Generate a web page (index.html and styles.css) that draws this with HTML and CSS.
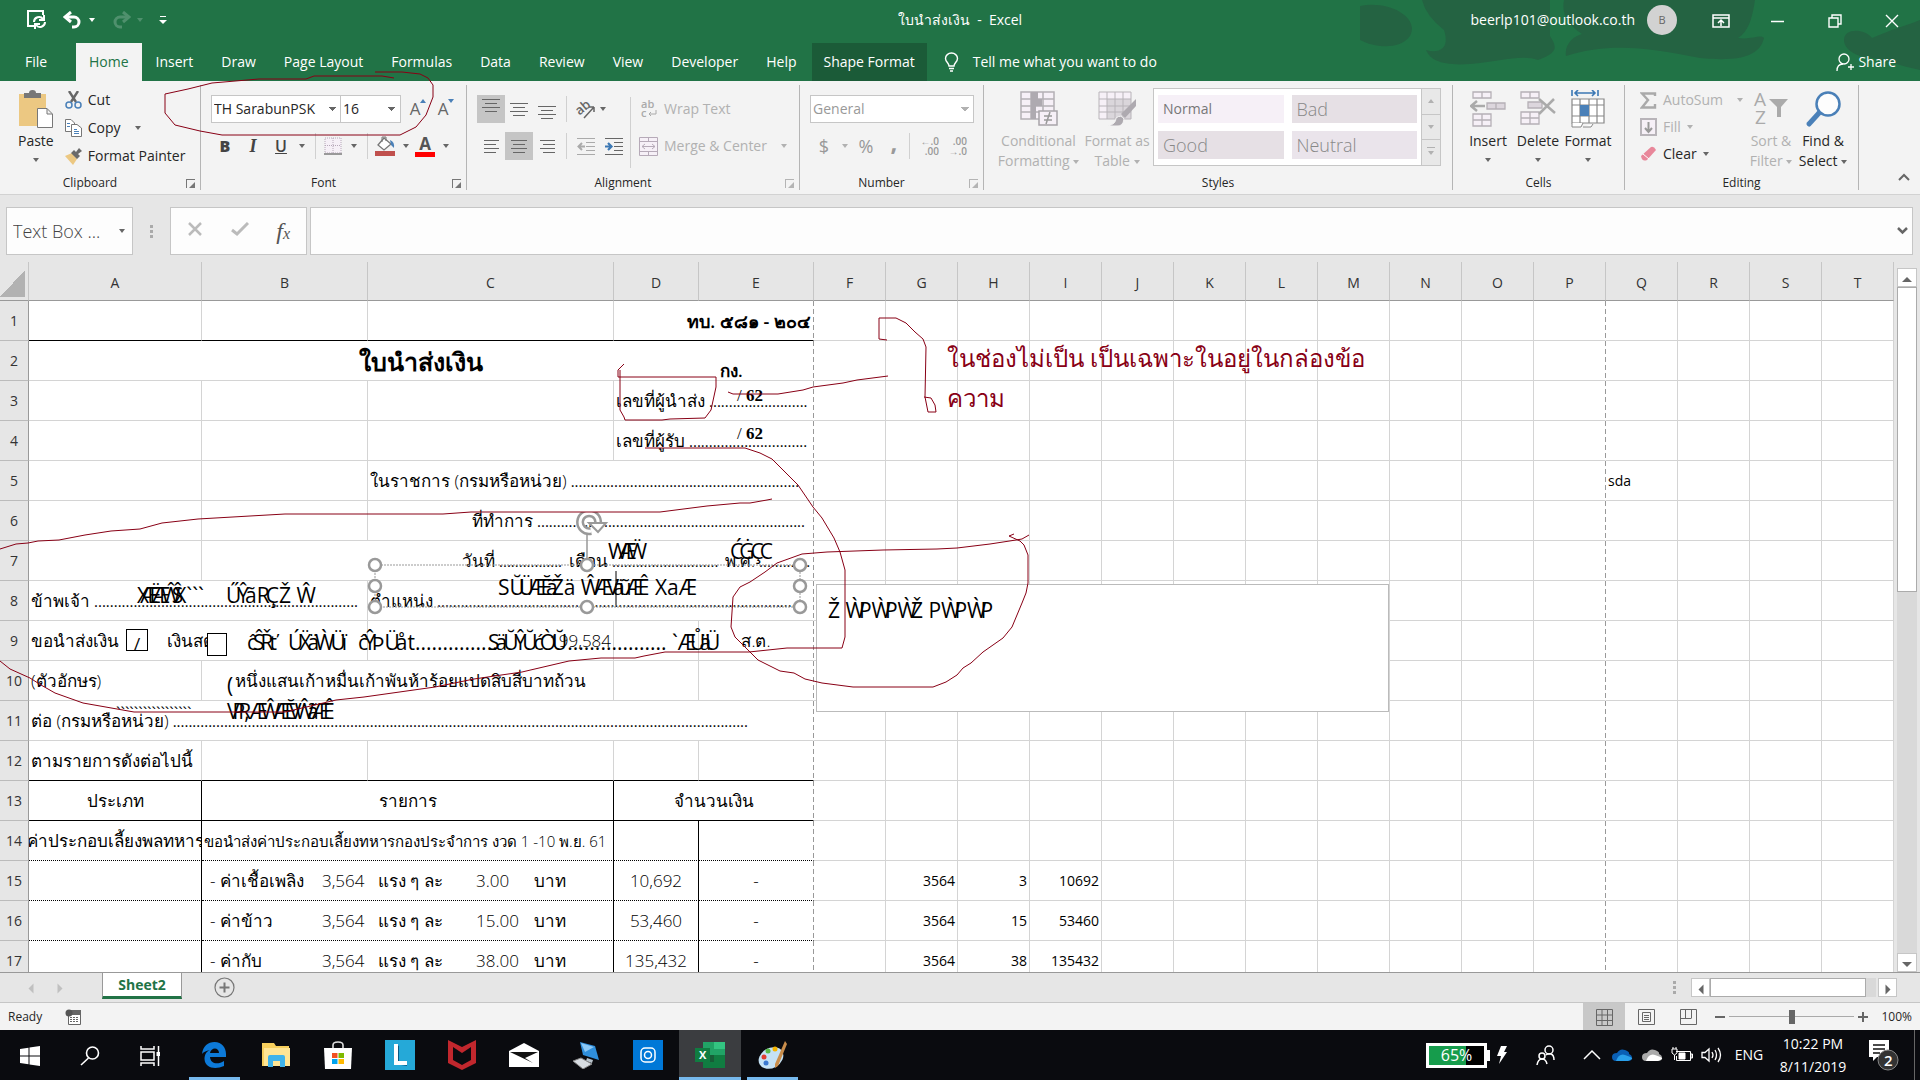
FILE: index.html
```html
<!DOCTYPE html>
<html lang="en">

<head>
  <meta charset="UTF-8" />
  <meta name="viewport" content="width=device-width, initial-scale=1.0" />
  <title>ใบนำส่งเงิน - Excel</title>
  <link rel="stylesheet" href="styles.css">
</head>

<body>
  <!-- Title bar and tabs -->
  <header class="app-header">
    <svg class="header-art" viewBox="0 0 560 81" aria-hidden="true">
      <path d="M0 6C30 0 60 18 50 36C40 50 15 48 0 40Z M62 0H190V36C196 46 200 52 178 60C160 54 140 62 110 64C82 66 70 60 66 50C80 54 90 48 84 30Q66 16 62 0Z M204 0H395C392 20 388 32 378 38C392 40 400 34 404 38C400 56 380 62 340 58C290 48 250 42 206 56C204 44 214 36 222 34Q200 20 204 0Z M484 40C484 28 504 28 512 38C530 30 545 26 560 20V70C540 66 520 58 500 56Q484 50 484 40Z" />
    </svg>
    <div class="title-bar">
      <div class="quick-access">
        <button class="quick-btn" title="Save">
          <svg width="20" height="20" viewBox="0 0 20 20" fill="none" stroke="#fff" stroke-width="2"><path d="M7 16H1V1H16V5" /><path d="M7 12A5 5 0 0 1 16 9M18 12A5 5 0 0 1 9 15M17 5V10H12M8 19V14H13" /></svg>
        </button>
        <button class="quick-btn undo" title="Undo">
          <svg width="20" height="18" viewBox="0 0 20 18" fill="none" stroke="#fff" stroke-width="3"><path d="M2 6H11A5 5 0 0 1 11 16H9" /><path d="M8 1L2 6L8 11" /></svg>
          <i class="caret"></i>
        </button>
        <button class="quick-btn redo" title="Redo">
          <svg width="20" height="18" viewBox="0 0 20 18" fill="none" stroke="#4f906d" stroke-width="3"><path d="M18 6H9A5 5 0 0 0 9 16H11" /><path d="M12 1L18 6L12 11" /></svg>
          <i class="caret"></i>
        </button>
        <button class="quick-btn" title="Customize Quick Access Toolbar">
          <svg width="8" height="8" viewBox="0 0 8 8" fill="#fff"><path d="M1 0H7V1H1ZM0 4H8L4 8Z" /></svg>
        </button>
      </div>
      <h1 class="window-title">ใบนำส่งเงิน &nbsp;-&nbsp; Excel</h1>
      <div class="window-tools">
        <span class="account">beerlp101@outlook.co.th</span>
        <span class="avatar">B</span>
        <button class="win-btn" title="Ribbon Display Options">
          <svg width="18" height="14" viewBox="0 0 18 14" fill="none" stroke="#fff"><path d="M1 1H17V13H1ZM1 4H17M9 12V6M6 9L9 6L12 9" stroke-width="1.5" /></svg>
        </button>
        <button class="win-btn" title="Minimize"><svg width="13" height="14" viewBox="0 0 13 14"><path d="M0 7.5H13" stroke="#fff" stroke-width="1.5" /></svg></button>
        <button class="win-btn" title="Restore Down">
          <svg width="14" height="14" viewBox="0 0 14 14" fill="none" stroke="#fff" stroke-width="1.4"><path d="M1 4H10V13H1ZM4 4V1H13V10H10" /></svg>
        </button>
        <button class="win-btn" title="Close"><svg width="14" height="14" viewBox="0 0 14 14"><path d="M1 1L13 13M13 1L1 13" stroke="#fff" stroke-width="1.4" /></svg></button>
      </div>
    </div>
    <nav class="tabs">
      <button class="tab file">File</button>
      <button class="tab active">Home</button>
      <button class="tab">Insert</button>
      <button class="tab">Draw</button>
      <button class="tab">Page Layout</button>
      <button class="tab">Formulas</button>
      <button class="tab">Data</button>
      <button class="tab">Review</button>
      <button class="tab">View</button>
      <button class="tab">Developer</button>
      <button class="tab">Help</button>
      <button class="tab context">Shape Format</button>
      <button class="tab tell-me">
        <svg width="15" height="20" viewBox="0 0 15 20" fill="none" stroke="#fff" stroke-width="1.4"><path d="M5 14C5 11 1.500 10 1.500 6.500A6 5.500 0 0 1 13.500 6.500C13.500 10 10 11 10 14ZM5 16.500H10M6 19H9" /></svg>
        Tell me what you want to do
      </button>
      <button class="tab share">
        <svg width="18" height="19" viewBox="0 0 18 19" fill="none" stroke="#fff" stroke-width="1.3"><path d="M1 18C1 13 3 11 7 11M12 14H18M15 11V17" /><circle cx="8" cy="6" r="5" /></svg>
        Share
      </button>
    </nav>
  </header>

  <!-- Ribbon -->
  <section class="ribbon">
    <div class="group clipboard">
      <div class="group-body">
        <button class="big-btn">
          <svg width="34" height="38" viewBox="0 0 34 38"><path d="M0 4H27V36H0Z" fill="#ecc882" /><path d="M5 8V3H10Q10 0 13.500 0T17 3H22V8Z" fill="#777" /><path d="M18.500 18.500H28L33.500 24V37.500H18.500ZM28 18.500V24H33" fill="#fff" stroke="#777" /></svg>
          <span>Paste</span><i class="caret"></i>
        </button>
        <div class="stack">
          <button class="tool">
            <svg width="17" height="18" viewBox="0 0 17 18" fill="none"><path d="M4 0L11 11M13 0L6 11" stroke="#666" stroke-width="2.400" /><circle cx="4" cy="14" r="3" stroke="#4a80b8" stroke-width="1.500" /><circle cx="13" cy="14" r="3" stroke="#4a80b8" stroke-width="1.500" /></svg>
            Cut
          </button>
          <button class="tool">
            <svg width="17" height="18" viewBox="0 0 17 18" fill="#fff" stroke="#777"><path d="M.5.5H6L9.500 4V12.500H.5Z" /><path d="M6.500 5.500H12L16.500 9V17.500H6.500Z" /><path d="M2 4.500H5M2 7.500H5M9 10.500H12M9 12.500H14M9 14.500H14" stroke="#4a80b8" /></svg>
            Copy <i class="caret wide"></i>
          </button>
          <button class="tool">
            <svg width="17" height="17" viewBox="0 0 17 17"><path d="M0 8L7 5L12 11L8 17Z" fill="#ecc882" /><path d="M6 5L9 2L11 4L14 0L17 3L13 6L15 8L12 11Z" fill="#6b6b6b" /></svg>
            Format Painter
          </button>
        </div>
      </div>
      <div class="group-name">Clipboard<i class="launcher"></i></div>
    </div>

    <div class="group font">
      <div class="group-body rows">
        <div class="row">
          <select class="combo font-name" aria-label="Font"><option>TH SarabunPSK</option></select>
          <select class="combo font-size" aria-label="Font size"><option>16</option></select>
          <button class="icon-btn grow" title="Increase Font Size">A<svg width="6" height="4" viewBox="0 0 6 4"><path d="M0 4L3 0L6 4Z" fill="#4a80b8" /></svg></button>
          <button class="icon-btn grow" title="Decrease Font Size">A<svg width="6" height="4" viewBox="0 0 6 4"><path d="M0 0H6L3 4Z" fill="#4a80b8" /></svg></button>
        </div>
        <div class="row">
          <button class="icon-btn letter"><b>B</b></button>
          <button class="icon-btn letter italic"><b>I</b></button>
          <button class="icon-btn letter"><u>U</u></button>
          <i class="caret"></i><i class="sep"></i>
          <button class="icon-btn" title="Borders"><svg width="18" height="18" viewBox="0 0 18 18"><path d="M1 1H17V16H1ZM9 1V16M1 8.500H17" fill="#f6f0f7" stroke="#b6a8b8" stroke-dasharray="1 1" /><path d="M0 17H18" stroke="#999" stroke-width="2" /></svg></button>
          <i class="caret"></i><i class="sep"></i>
          <button class="icon-btn" title="Fill Color"><svg width="20" height="20" viewBox="0 0 20 20"><path d="M9 2L16 8L9 14L3 9Z" fill="#fff" stroke="#777" stroke-width="1.300" /><path d="M7 6V1H11V5" fill="none" stroke="#777" /><path d="M15 4Q20 6 19 12L16 9Z" fill="#4a80b8" /><path d="M0 15H20V20H0Z" fill="#c0504d" /></svg></button>
          <i class="caret"></i>
          <button class="icon-btn font-color" title="Font Color"><b>A</b></button>
          <i class="caret"></i>
        </div>
      </div>
      <div class="group-name">Font<i class="launcher"></i></div>
    </div>

    <div class="group alignment">
      <div class="group-body">
        <div class="stack pair">
          <div class="row">
            <button class="align-btn on top" title="Top Align"><i class="lines"></i></button>
            <button class="align-btn" title="Middle Align"><i class="lines"></i></button>
            <button class="align-btn bottom" title="Bottom Align"><i class="lines"></i></button>
            <i class="sep"></i>
            <button class="icon-btn" title="Orientation"><svg width="20" height="20" viewBox="0 0 20 20"><text x="0" y="13" font-size="13" font-weight="600" fill="#666" transform="rotate(-40 7 10)">ab</text><path d="M8 19L18 8M18 8V13M18 8H13" stroke="#666" stroke-width="1.500" fill="none" /></svg></button>
            <i class="caret"></i>
          </div>
          <div class="row">
            <button class="align-btn" title="Align Left"><i class="lines left"></i></button>
            <button class="align-btn on" title="Center"><i class="lines center"></i></button>
            <button class="align-btn" title="Align Right"><i class="lines right"></i></button>
            <i class="sep"></i>
            <button class="icon-btn" title="Decrease Indent"><svg width="18" height="17" viewBox="0 0 18 17"><path d="M0 .5H18M9 4.500H18M9 8.500H18M9 12.500H18M0 16.500H18" stroke="#aaa" /><path d="M8 8.500H2M5 5L1.500 8.500L5 12" stroke="#aaa" stroke-width="2" fill="none" /></svg></button>
            <button class="icon-btn" title="Increase Indent"><svg width="18" height="17" viewBox="0 0 18 17"><path d="M0 .5H18M9 4.500H18M9 8.500H18M9 12.500H18M0 16.500H18" stroke="#666" /><path d="M0 8.500H6M3 5L6.500 8.500L3 12" stroke="#3c78b4" stroke-width="2.200" fill="none" /></svg></button>
          </div>
        </div>
        <i class="sep tall"></i>
        <div class="stack pair">
          <button class="tool disabled">
            <svg width="19" height="19" viewBox="0 0 19 19"><text x="2" y="8" font-size="11" font-weight="600" fill="#aaa">ab</text><text x="2" y="17" font-size="11" font-weight="600" fill="#aaa">c</text><path d="M17 10V14H10M12 12L10 14L12 16" stroke="#aaa" fill="none" /></svg>
            Wrap Text
          </button>
          <button class="tool disabled">
            <svg width="19" height="19" viewBox="0 0 19 19" fill="#f6f0f7" stroke="#b6aab8"><path d="M.5.5H18.500V18.500H.5ZM.5 4.500H18.500M.5 14.500H18.500M9.500 0V4M9.500 15V19M3 9.500H16M6 7L3 9.500L6 12M13 7L16 9.500L13 12" /></svg>
            Merge &amp; Center <i class="caret wide"></i>
          </button>
        </div>
      </div>
      <div class="group-name">Alignment<i class="launcher pale"></i></div>
    </div>

    <div class="group number">
      <div class="group-body rows">
        <div class="row"><select class="combo pale" aria-label="Number format" disabled><option>General</option></select></div>
        <div class="row disabled">
          <button class="icon-btn sign">$</button><i class="caret"></i>
          <button class="icon-btn sign">%</button>
          <button class="icon-btn sign comma">,</button>
          <i class="sep"></i>
          <button class="icon-btn decimals"><span>&#8592;.0</span><span>.00</span></button>
          <button class="icon-btn decimals"><span>.00</span><span>&#8594;.0</span></button>
        </div>
      </div>
      <div class="group-name">Number<i class="launcher pale"></i></div>
    </div>

    <div class="group styles">
      <div class="group-body">
        <button class="big-btn disabled">
          <svg width="38" height="36" viewBox="0 0 38 36"><path d="M1 1H34V28H1ZM1 8H34M1 15H34M1 21H34M11 1V28M23 1V28" fill="#f6f0f7" stroke="#b4b0b5" stroke-width="1.500" /><path d="M11 1H18V8H22V15H16V28H11Z" fill="#aeaab0" /><path d="M19 20H37V34H19Z" fill="#f6f0f7" stroke="#a8a4a9" stroke-width="1.500" /><path d="M24 25H32M24 29H32M30 21L26 33" stroke="#999" stroke-width="1.500" /></svg>
          <span>Conditional<br>Formatting <i class="caret"></i></span>
        </button>
        <button class="big-btn disabled">
          <svg width="38" height="36" viewBox="0 0 38 36"><path d="M1 1H33V28H1Z" fill="#f6f0f7" /><path d="M9 8H33V28H9Z" fill="#dad6db" /><path d="M1 1H33V28H1ZM1 8H33M1 15H33M1 21H33M9 1V28M17 1V28M25 1V28" fill="none" stroke="#b8b4b9" /><path d="M38 8V15L27 27L23 23Z" fill="#aeaab0" /><path d="M10 35Q18 33 18 27Q23 23 26 28Q25 36 18 35Z" fill="#aeaab0" stroke="#f3f3f3" /></svg>
          <span>Format as<br>Table <i class="caret"></i></span>
        </button>
        <div class="gallery">
          <button class="style normal">Normal</button><button class="style bad">Bad</button>
          <button class="style good">Good</button><button class="style neutral">Neutral</button>
        </div>
        <div class="gallery-scroll">
          <button title="Row up"><i class="caret up"></i></button><button title="Row down"><i class="caret"></i></button><button title="More"><i class="caret more"></i></button>
        </div>
      </div>
      <div class="group-name">Styles</div>
    </div>

    <div class="group cells">
      <div class="group-body">
        <button class="big-btn">
          <svg width="36" height="36" viewBox="0 0 36 36" fill="#f6f0f7" stroke="#b5b0b6" stroke-width="1.300"><path d="M3 1H21V7H3ZM12 1V7M3 23H21V35H3ZM12 23V35M3 29H21" /><path d="M17 12H35V18H17ZM26 12V18" fill="#dcd6dd" /><path d="M15 15H2M7 10L1 15L7 20" stroke="#aaa" stroke-width="2.500" fill="none" /></svg>
          <span>Insert</span><i class="caret"></i>
        </button>
        <button class="big-btn">
          <svg width="36" height="36" viewBox="0 0 36 36" fill="#f6f0f7" stroke="#b5b0b6" stroke-width="1.300"><path d="M1 1H19V7H1ZM10 1V7M1 21H19V33H1ZM10 21V33M1 27H19" /><path d="M8 11H22V17H8Z" fill="#dcd6dd" /><path d="M19 8L35 22M34 8L19 23" stroke="#aaa" stroke-width="2.500" /></svg>
          <span>Delete</span><i class="caret"></i>
        </button>
        <button class="big-btn">
          <svg width="36" height="38" viewBox="0 0 36 38"><path d="M2 9H34V33H2Z" fill="#fff" /><path d="M2 9H34V33H2ZM2 15H34M2 26H34M10 9V33M19 9V33M27 9V33" fill="none" stroke="#888" stroke-width="1.200" /><path d="M10 15H19V26H10Z" fill="#4a80b8" /><path d="M2 33V37H11L13 33M13 37H21L23 34" fill="#fff" stroke="#888" /><path d="M2 0V6M28 0V6M5 3H25M8 0L5 3L8 6M22 0L25 3L22 6" fill="none" stroke="#3c78b4" stroke-width="1.600" /></svg>
          <span>Format</span><i class="caret"></i>
        </button>
      </div>
      <div class="group-name">Cells</div>
    </div>

    <div class="group editing">
      <div class="group-body">
        <div class="stack">
          <button class="tool disabled"><svg width="17" height="17" viewBox="0 0 17 17"><path d="M15 4V1.500H2L8 8L2 15.500H15V12" fill="none" stroke="#aaa" stroke-width="2.400" /></svg>AutoSum <i class="caret wide"></i></button>
          <button class="tool disabled"><svg width="17" height="18" viewBox="0 0 17 18"><path d="M1 1H16V17H1Z" fill="#f6f0f7" stroke="#b8b4b9" stroke-width="2" /><path d="M8.500 4V14M5 10L8.500 14L12 10" stroke="#999" stroke-width="2" fill="none" /></svg>Fill <i class="caret"></i></button>
          <button class="tool"><svg width="17" height="16" viewBox="0 0 17 16"><path d="M1 10L11 1Q14 0 16 4L7 14Q2 16 1 10Z" fill="#e8879a" /><path d="M3 8L9 13" stroke="#fff" /></svg>Clear <i class="caret"></i></button>
        </div>
        <button class="big-btn disabled">
          <svg width="36" height="36" viewBox="0 0 36 36"><text x="1" y="15" font-size="19" fill="#aaa">A</text><text x="2" y="33" font-size="19" fill="#aaa">Z</text><path d="M16 8H35L28 16V26H24V16Z" fill="#aaa" /></svg>
          <span>Sort &amp;<br>Filter <i class="caret"></i></span>
        </button>
        <button class="big-btn">
          <svg width="36" height="36" viewBox="0 0 36 36"><path d="M14 22L4 33" stroke="#4a80b8" stroke-width="5" stroke-linecap="round" /><circle cx="23" cy="13" r="11.500" fill="#fdfdfd" stroke="#4a80b8" stroke-width="2.500" /></svg>
          <span>Find &amp;<br>Select <i class="caret"></i></span>
        </button>
      </div>
      <div class="group-name">Editing</div>
    </div>
    <button class="collapse" title="Collapse the Ribbon"><svg width="12" height="8" viewBox="0 0 12 8"><path d="M1 7L6 2L11 7" fill="none" stroke="#666" stroke-width="2" /></svg></button>
  </section>

  <!-- Formula bar -->
  <section class="formula-bar">
    <div class="name-box"><input type="text" aria-label="Name box" value="Text Box ..."><i class="caret"></i></div>
    <i class="grip"></i>
    <div class="formula-tools">
      <button title="Cancel"><svg width="16" height="14" viewBox="0 0 16 14"><path d="M2 1L14 13M14 1L2 13" stroke="#bbb" stroke-width="2.500" /></svg></button>
      <button title="Enter"><svg width="18" height="14" viewBox="0 0 18 14"><path d="M1 8L6 12L17 1" fill="none" stroke="#bbb" stroke-width="3" /></svg></button>
      <button title="Insert Function" class="fx">f<small>x</small></button>
    </div>
    <div class="formula-box">
      <input type="text" aria-label="Formula">
      <svg width="11" height="8" viewBox="0 0 11 8"><path d="M1 1L5.500 5.500L10 1" fill="none" stroke="#666" stroke-width="2.500" /></svg>
    </div>
  </section>

  <!-- Worksheet -->
  <main class="sheet">
    <div class="grid">
      <table>
        <colgroup>
          <col class="w-head"><col class="w-a"><col class="w-b"><col class="w-c"><col class="w-d"><col class="w-e">
          <col span="15" class="w-rest">
        </colgroup>
        <thead>
          <tr id="letters"><th class="corner"></th></tr>
        </thead>
        <tbody id="cells">
          <tr class="rule"><td></td><td></td><td></td><td colspan="2" class="end strong">ทบ. ๕๘๑ - ๒๐๔</td></tr>
          <tr><td colspan="5" class="mid title">ใบนำส่งเงิน</td></tr>
          <tr><td></td><td></td><td></td><td colspan="2"><div class="line">เลขที่ผู้นำส่ง <span class="dots"></span></div></td></tr>
          <tr><td></td><td></td><td></td><td colspan="2"><div class="line">เลขที่ผู้รับ <span class="dots"></span></div></td></tr>
          <tr><td></td><td></td><td colspan="3"><div class="line branch">ในราชการ (กรมหรือหน่วย) <span class="dots"></span></div></td></tr>
          <tr><td></td><td></td><td colspan="3"><div class="line office">ที่ทำการ <span class="dots"></span></div></td></tr>
          <tr><td></td><td colspan="4"><div class="line date">วันที่ <span class="dots day"></span> เดือน <span class="dots"></span> พ.ศ. <span class="dots year"></span></div></td></tr>
          <tr><td colspan="2"><div class="line">ข้าพเจ้า <span class="dots"></span></div></td><td colspan="3"><div class="line">ตำแหน่ง <span class="dots"></span></div></td></tr>
          <tr><td colspan="2"><div class="line cash"><span>ขอนำส่งเงิน</span><span>เงินสด</span></div></td><td class="end">199,584</td><td></td><td class="mid">ส.ต.</td></tr>
          <tr><td>(ตัวอักษร)</td><td colspan="2"><div class="line words">หนึ่งแสนเก้าหมื่นเก้าพันห้าร้อยแปดสิบสี่บาทถ้วน</div></td><td></td><td></td></tr>
          <tr><td colspan="5"><div class="line unit">ต่อ (กรมหรือหน่วย) <span class="dots"></span></div></td></tr>
          <tr class="rule"><td>ตามรายการดังต่อไปนี้</td><td></td><td></td><td></td><td></td></tr>
          <tr class="rule"><td class="mid bar">ประเภท</td><td colspan="2" class="mid bar">รายการ</td><td colspan="2" class="mid">จำนวนเงิน</td></tr>
          <tr class="dotted"><td class="bar"><div class="spill">ค่าประกอบเลี้ยงพลทหาร</div></td><td colspan="2" class="bar small">ขอนำส่งค่าประกอบเลี้ยงทหารกองประจำการ งวด 1 -10 พ.ย. 61</td><td class="bar"></td><td></td></tr>
          <tr class="dotted"><td class="bar"></td><td colspan="2" class="bar"><div class="item"><span>- ค่าเชื้อเพลิง</span><span>3,564</span><span>แรง ๆ ละ</span><span>3.00</span><span>บาท</span></div></td><td class="bar mid">10,692</td><td class="mid">-</td></tr>
          <tr class="dotted"><td class="bar"></td><td colspan="2" class="bar"><div class="item"><span>- ค่าข้าว</span><span>3,564</span><span>แรง ๆ ละ</span><span>15.00</span><span>บาท</span></div></td><td class="bar mid">53,460</td><td class="mid">-</td></tr>
          <tr><td class="bar"></td><td colspan="2" class="bar"><div class="item"><span>- ค่ากับ</span><span>3,564</span><span>แรง ๆ ละ</span><span>38.00</span><span>บาท</span></div></td><td class="bar mid">135,432</td><td class="mid">-</td></tr>
        </tbody>
      </table>

      <!-- Floating shapes and text boxes -->
      <div class="shape note">ในช่องไม่เป็น เป็นเฉพาะในอยู่ในกล่องข้อ<br>ความ</div>
      <div class="shape kong">กง.</div>
      <div class="shape no-sent">/ <b>62</b></div>
      <div class="shape no-recv">/ <b>62</b></div>
      <div class="shape month">W<i></i>Æ<i></i>Ẅ</div>
      <div class="shape year-be">Ć<i></i>Ġ<i></i>Ç<i></i>C</div>
      <div class="shape person">X<i></i>Æ<i></i>Ë<i></i>Æ<i></i>Ŵ<i></i>Ŝ<i></i>X```</div>
      <div class="shape surname">Ű<i></i>Ŷ<i></i>ãR<i></i>ÇŽ Ŵ</div>
      <div class="shape tick-box one">/</div>
      <div class="shape tick-box two"></div>
      <div class="shape kind">ĉ<i></i>Ŝ<i></i>Ř<i></i>ť &nbsp;Ú<i></i>Ẍ<i></i>ä<i></i>Ẁ<i></i>Ü<i></i>ï &nbsp;ĉ<i></i>Ŷ<i></i>ÞÜ<i></i>åt...............</div>
      <div class="shape amount">S<i></i>ä<i></i>Ŭ<i></i>Ŷ<i></i>Ŭ<i></i>ć<i></i>Ò<i></i>Ŭ..................</div>
      <div class="shape baht">`Æ<i></i>Ů<i></i>ä<i></i>Ü</div>
      <div class="shape paren">(</div>
      <div class="shape ticks">`````````````````</div>
      <div class="shape unit-name">V<i></i>P<i></i>R<i></i>,Æ<i></i>Ŵ<i></i>Æ<i></i>Ĕ<i></i>V<i></i>Ŵ<i></i>ã<i></i>Æ<i></i>Ê</div>
      <div class="shape blank-box">Ž Ẁ<i></i>PẀ<i></i>PẀ<i></i>Ž PẀ<i></i>PẀ<i></i>P</div>
      <div class="shape position">SŬ<i></i>Ü<i></i>Æ<i></i>Ĕ<i></i>ã<i></i>Žä Ŵ<i></i>Æ<i></i>V<i></i>ä<i></i>ũ<i></i>Æ<i></i>Ê XaÆ</div>
      <svg class="shape selection" width="450" height="110" viewBox="0 0 450 110">
        <g fill="none" stroke="#999"><path d="M13 53H438V95H13Z" stroke-dasharray="2 1" /><path d="M225 22V53" stroke-width="1.500" /></g>
        <g fill="#fff" stroke="#999" stroke-width="2.500"><circle cx="13" cy="53" r="6" /><circle cx="225" cy="53" r="6" /><circle cx="438" cy="53" r="6" /><circle cx="13" cy="74" r="6" /><circle cx="438" cy="74" r="6" /><circle cx="13" cy="95" r="6" /><circle cx="225" cy="95" r="6" /><circle cx="438" cy="95" r="6" /></g>
        <path d="M233 17A9 9 0 1 0 229 19" fill="none" stroke="#999" stroke-width="8" /><path d="M233 17A9 9 0 1 0 229 19" fill="none" stroke="#fff" stroke-width="3" /><path d="M227 11H244L236 20Z" fill="#fff" stroke="#999" stroke-width="2" />
        <path d="M254 59V93" stroke="#000" />
      </svg>
    </div>
    <div class="v-scroll">
      <button title="Scroll up"><i class="caret up"></i></button>
      <i class="thumb"></i>
      <button title="Scroll down"><i class="caret"></i></button>
    </div>
  </main>

  <!-- Sheet tabs -->
  <section class="sheet-bar">
    <button class="nav-arrow" title="Previous sheet"><i class="caret prev"></i></button>
    <button class="nav-arrow" title="Next sheet"><i class="caret next"></i></button>
    <button class="sheet-tab">Sheet2</button>
    <button class="add-sheet" title="New sheet"><svg width="21" height="21" viewBox="0 0 21 21" fill="none" stroke="#777"><circle cx="10.500" cy="10.500" r="9.500" stroke-width="1.200" /><path d="M10.500 5.500V15.500M5.500 10.500H15.500" stroke-width="2" /></svg></button>
    <i class="grip"></i>
    <div class="h-scroll">
      <button title="Scroll left"><i class="caret prev"></i></button>
      <div class="track"><i class="thumb"></i></div>
      <button title="Scroll right"><i class="caret next"></i></button>
    </div>
  </section>

  <footer class="status-bar">
    <span class="ready">Ready</span>
    <svg width="16" height="16" viewBox="0 0 16 16"><path d="M3.500 4.500H15.500V15.500H3.500Z" fill="#fff" stroke="#666" /><path d="M3 1H16V6H3Z" fill="#666" /><circle cx="4" cy="4" r="3.500" fill="#555" /><path d="M5 8.500H14M5 10.500H14M5 12.500H14" stroke="#666" stroke-dasharray="2 1" /></svg>
    <div class="views">
      <button class="on" title="Normal"><svg width="17" height="17" viewBox="0 0 17 17" fill="none" stroke="#666"><path d="M.5.5H16.500V16.500H.5ZM6 0V17M11.500 0V17M0 6H17M0 11.500H17" /></svg></button>
      <button title="Page Layout"><svg width="17" height="16" viewBox="0 0 17 16" fill="none" stroke="#666"><path d="M.5.5H16.500V15.500H.5ZM4.500 3.500H12.500V12.500H4.500ZM6 6.500H11M6 8.500H11M6 10.500H11" /></svg></button>
      <button title="Page Break Preview"><svg width="17" height="16" viewBox="0 0 17 16" fill="none" stroke="#666"><path d="M.5.5H16.500V15.500H.5ZM5.500 0V9M11.500 0V9M0 9.500H11.500" /></svg></button>
    </div>
    <button class="zoom-btn" title="Zoom out"><svg width="10" height="10" viewBox="0 0 10 10"><path d="M0 5H10" stroke="#666" stroke-width="2" /></svg></button>
    <input type="range" class="zoom" min="0" max="200" value="100" aria-label="Zoom">
    <button class="zoom-btn" title="Zoom in"><svg width="10" height="10" viewBox="0 0 10 10"><path d="M0 5H10M5 0V10" stroke="#666" stroke-width="2" /></svg></button>
    <span class="zoom-value">100%</span>
  </footer>

  <!-- Windows taskbar -->
  <nav class="taskbar">
    <button class="sys" title="Start"><svg width="20" height="20" viewBox="0 0 20 20" fill="#fff"><path d="M0 3L8.500 1.800V9.500H0ZM9.500 1.600L20 0V9.500H9.500ZM0 10.500H8.500V18.200L0 17ZM9.500 10.500H20V20L9.500 18.400Z" /></svg></button>
    <button class="sys" title="Search"><svg width="20" height="20" viewBox="0 0 20 20" fill="none" stroke="#fff" stroke-width="1.600"><circle cx="12.500" cy="7" r="6" /><path d="M8.500 12L1 19" /></svg></button>
    <button class="sys" title="Task View"><svg width="20" height="20" viewBox="0 0 20 20" fill="none" stroke="#fff" stroke-width="1.500"><path d="M1 0V3H14V0M1 6H14V14H1ZM1 20V17H14V20M18.500 0V20" /><path d="M16.500 6H20V10H16.500Z" fill="#fff" stroke="none" /></svg></button>
    <button class="app running" title="Edge"><svg width="26" height="26" viewBox="0 0 26 26"><path d="M1 12C2 4 7 0 13.500 0C21 0 25 6 25 12V15H9C9.500 22 17 23 23 19V24C14 28 4 26 3.500 17C3.500 12 6 9 9 8C5 9 2 10 1 12ZM9 11H18C18 5 10 5 9 11Z" fill="#0d7ad8" fill-rule="evenodd" /></svg></button>
    <button class="app" title="File Explorer"><svg width="28" height="24" viewBox="0 0 28 24"><path d="M0 0H12L14 3H27V23H0Z" fill="#f7cf5c" /><path d="M2 5H28V23H2Z" fill="#ffe594" /><path d="M6 24V14Q6 12 8 12H21Q23 12 23 14V24H18V18H11V24Z" fill="#3fb3ea" /></svg></button>
    <button class="app" title="Store"><svg width="28" height="28" viewBox="0 0 28 28"><path d="M9 8V4Q9 1 14 1T19 4V8" fill="none" stroke="#ddd" stroke-width="1.600" /><path d="M0 7H28L27 28H1Z" fill="#fff" /><path d="M8 12H13.500V17H8Z" fill="#f25022" /><path d="M14.500 12H20V17H14.500Z" fill="#7fba00" /><path d="M8 18H13.500V23H8Z" fill="#00a4ef" /><path d="M14.500 18H20V23H14.500Z" fill="#ffb900" /></svg></button>
    <button class="app" title="Lenovo"><svg width="30" height="30" viewBox="0 0 30 30"><path d="M0 0H30V30H0Z" fill="#25a9d8" /><path d="M10 4L14 6V22H22V26L10 24Z" fill="#0a5a86" /><path d="M9 4H13V21H22V25H9Z" fill="#fff" /></svg></button>
    <button class="app" title="McAfee"><svg width="28" height="30" viewBox="0 0 28 30"><path d="M0 0L14 7L28 0V23L14 30L0 23ZM5 7V20L14 25L23 20V7L14 13Z" fill="#c1272d" fill-rule="evenodd" /></svg></button>
    <button class="app" title="Mail"><svg width="30" height="24" viewBox="0 0 30 24"><path d="M0 8L15 0L30 8V24H0Z" fill="#fff" /><path d="M1 9H29L16 15L24 20Z" fill="#111" /></svg></button>
    <button class="app" title="This PC"><svg width="28" height="28" viewBox="0 0 28 28"><path d="M8 1L23 5L27 19L11 14Z" fill="#2f8fdc" /><path d="M9 2L22 6L13 11Z" fill="#8cc8f5" /><path d="M15 17L21 19L20 22L14 20Z" fill="#b9c4cc" /><path d="M1 20L9 17L20 23L11 28Z" fill="#d8dde2" stroke="#888" /></svg></button>
    <button class="app" title="Camera"><svg width="30" height="30" viewBox="0 0 30 30"><path d="M0 0H30V30H0Z" fill="#0078d7" /><g fill="none" stroke="#fff" stroke-width="1.500"><rect x="8" y="8" width="14" height="14" rx="4" /><circle cx="15" cy="15" r="3.500" /></g></svg></button>
    <button class="app running current" title="Excel"><svg width="30" height="26" viewBox="0 0 30 26"><path d="M8 0H30V26H8Z" fill="#21a366" /><path d="M19 0H30V7H19Z" fill="#33c481" /><path d="M8 13H30V26H8Z" fill="#107c41" /><path d="M8 13H19V20H8Z" fill="#185c37" /><path d="M0 6H15V20H0Z" fill="#107c41" /><text x="4" y="17" font-size="11" font-weight="700" fill="#fff">X</text></svg></button>
    <button class="app running" title="Paint"><svg width="30" height="28" viewBox="0 0 30 28"><ellipse cx="14" cy="17" rx="13" ry="10" fill="#c5e2f5" transform="rotate(-30 14 17)" /><circle cx="7" cy="16" r="2.500" fill="#e03c31" /><circle cx="11" cy="10" r="2.500" fill="#56b947" /><circle cx="18" cy="8" r="2.500" fill="#f4b400" /><circle cx="9" cy="22" r="2.500" fill="#3a78d0" /><path d="M28 0L30 3L21 25L18 27L18 23Z" fill="#c98d4b" /></svg></button>

    <div class="tray">
      <span class="battery"><span>65%</span></span>
      <svg class="bolt" width="10" height="18" viewBox="0 0 10 18"><path d="M4 0H10L7 6H10L2 18L4 10H0Z" fill="#fff" /></svg>
      <svg width="30" height="20" viewBox="0 0 30 20" fill="none" stroke="#fff" stroke-width="1.500"><circle cx="18" cy="5" r="4" /><circle cx="11" cy="11" r="3" /><path d="M6 20Q7 14 11 14T16 19M15 10Q17 8 20 9T23 15" /></svg>
      <i class="gap"></i>
      <svg width="30" height="16" viewBox="0 0 30 16"><path d="M7 12L15 4L23 12" fill="none" stroke="#fff" stroke-width="1.500" /></svg>
      <svg width="30" height="16" viewBox="0 0 30 16"><path d="M9 14Q5 14 5 10T10 6Q13 1 18 3T22 7Q25 8 25 11T21 14Z" fill="#0a5fb4" /><path d="M9 14Q12 6 18 8T25 11T21 14Z" fill="#2aa0ea" /></svg>
      <svg width="30" height="16" viewBox="0 0 30 16"><path d="M9 14Q5 14 5 10T10 6Q13 1 18 3T22 7Q25 8 25 11T21 14Z" fill="#aaa" /><path d="M9 14Q12 6 18 8T25 11T21 14Z" fill="#fff" /></svg>
      <svg width="30" height="16" viewBox="0 0 30 16" fill="none" stroke="#fff"><path d="M9 4.500H23.500V13.500H9.500V9M24 7V11H25.500V7Z" /><path d="M5 2H10V6L7.500 8L5 6ZM6 2V0M9 2V0M7.500 8V13" /><path d="M12 6H18V12H12Z" fill="#fff" /></svg>
      <svg width="30" height="16" viewBox="0 0 30 16" fill="none" stroke="#fff" stroke-width="1.300"><path d="M5 5.500H8L12 2V14L8 10.500H5ZM15 5Q17 8 15 11M18 3Q21 8 18 13M21 1Q26 8 21 15" /></svg>
      <span class="lang">ENG</span>
      <span class="clock">10:22 PM<br>8/11/2019</span>
      <button class="notes"><svg width="31" height="32" viewBox="0 0 31 32"><path d="M0 1H20V18H8L4 22V18H0Z" fill="#fff" /><path d="M4 6H16M4 10H16M4 14H11" stroke="#111" stroke-width="1.500" /><circle cx="19" cy="21" r="10" fill="#333" stroke="#888" /><text x="15" y="27" font-size="15" font-weight="600" fill="#fff">2</text></svg></button>
    </div>
  </nav>

  <!-- Hand drawn marks over the window -->
  <svg class="ink" width="1920" height="1080" viewBox="0 0 1920 1080" aria-hidden="true">
    <path d="M394 78L382 76H314L306 79H259L212 83L188 89L165 94V113L175 125L200 131L222 135H400L416 127L426 115L433 97V85L428 78L420 74L402 72H375" />
    <path d="M887 340L879 339V318H896L906 323L915 332L923 339L926 347L925 397L928 412H936L935 405L931 398L924 397" />
    <path d="M624 364L618 370V377H716V387L711 410L705 418L670 419L662 420H625L624 417L620 410V370" />
    <path d="M728 392L733 394H778L803 390L813 387L843 383L857 380L888 376" />
    <path d="M645 448H745L760 453L772 459L798 485L813 507L822 518L834 538L840 552L845 570V637L842 648H787L749 652H665L644 656L635 658H601L569 661L522 672L474 679L435 687L364 697L336 700L285 712H134L83 703L55 693L41 685L30 678L10 669L0 661" />
    <path d="M0 549L16 544L28 543L38 541L59 540L85 535L111 531L140 529L162 523L198 519L285 514H443L471 512H660L707 506L740 503H750L767 500L772 499" />
    <path d="M1029 535L1022 539L1016 540L990 544L957 548L937 549L883 550L827 552L802 554L777 563L765 572L750 582L740 587L733 597L731 627L735 637L747 649L758 660L780 671L794 673L805 679L822 683L853 687H933L946 682L957 675L963 668L971 663L983 652L1003 638L1012 627L1022 603L1026 593L1028 583V555L1024 545L1020 541L1009 536L1014 534" />
  </svg>

  <script>
    const columns = "ABCDEFGHIJKLMNOPQRST".split("");
    const letters = document.getElementById("letters");
    const rows = document.querySelectorAll("#cells tr");

    // Values outside the form, keyed by cell address
    const values = {
      Q5: "sda",
      G15: 3564, H15: 3, I15: 10692,
      G16: 3564, H16: 15, I16: 53460,
      G17: 3564, H17: 38, I17: 135432
    };

    columns.forEach((name) => {
      const th = document.createElement("th");
      th.textContent = name;
      letters.appendChild(th);
    });

    rows.forEach((row, index) => {
      // The last cell of the form sits on the page break
      row.lastElementChild.classList.add("page-break");

      const head = document.createElement("th");
      head.textContent = index + 1;
      row.prepend(head);

      columns.slice(5).forEach((name) => {
        const td = document.createElement("td");
        const value = values[name + (index + 1)];
        td.className = "plain";
        if (value !== undefined) {
          td.textContent = value;
          td.classList.toggle("end", typeof value === "number");
        }
        if (name === "P") td.classList.add("page-break");
        row.appendChild(td);
      });
    });

    // Fill each dotted line with as many dots as it has room for
    document.querySelectorAll(".dots").forEach((el) => {
      const width = el.clientWidth;
      el.textContent = ".".repeat(Math.floor(width / 4));
    });
  </script>
</body>

</html>
```
FILE: styles.css
```css
*,
*::after,
*::before {
  margin: 0;
  padding: 0;
  box-sizing: border-box;
}

body {
  height: 100vh;
  display: flex;
  flex-direction: column;
  position: relative;
  overflow: hidden;
  font-family: "Open Sans", "Noto Sans", sans-serif;
  font-size: 14px;
  line-height: 20px;
  color: #262626;
  background: #e6e6e6;
}

button,
input,
select {
  font: inherit;
  color: inherit;
  border: none;
  background: transparent;
}

button {
  white-space: nowrap;
}

svg {
  flex: none;
}

/* Small drop-down arrow */
.caret {
  display: inline-block;
  flex: none;
  border: 3px solid transparent;
  border-top: 4px solid #666;
  border-bottom: none;
  vertical-align: middle;
}

.caret.wide {
  margin-left: 8px;
}

.caret.up {
  transform: rotate(180deg);
}

.caret.prev {
  transform: rotate(90deg);
}

.caret.next {
  transform: rotate(-90deg);
}

.disabled {
  color: #b1b1b1;
}

.disabled .caret,
.gallery-scroll .caret {
  border-top-color: #b1b1b1;
}

/* Title bar */
.app-header {
  position: relative;
  flex: none;
  background: #217346;
  color: #fff;
}

.header-art {
  position: absolute;
  top: 0;
  right: 0;
  width: 560px;
  height: 81px;
  fill: #246342;
}

.title-bar {
  position: relative;
  height: 39px;
  display: grid;
  grid-template-columns: 1fr auto 1fr;
  align-items: center;
}

.quick-access {
  display: flex;
  align-items: center;
  gap: 16px;
  padding-left: 27px;
}

.quick-btn {
  display: flex;
  align-items: center;
  gap: 6px;
}

.quick-btn .caret {
  border-top-color: #fff;
}

.quick-btn.redo .caret {
  border-top-color: #4f906d;
}

.window-title {
  font-size: 14px;
  font-weight: 400;
}

.window-tools {
  display: flex;
  align-items: center;
  justify-content: flex-end;
}

.avatar {
  width: 30px;
  height: 30px;
  margin: 0 15px 0 12px;
  border-radius: 50%;
  background: #d2d2d2;
  color: #666;
  font-size: 11px;
  line-height: 30px;
  text-align: center;
}

.win-btn {
  width: 57px;
  height: 38px;
}

.win-btn svg {
  vertical-align: middle;
}

.tabs {
  position: relative;
  height: 42px;
  display: flex;
  padding-top: 4px;
}

.tab {
  padding: 0 14px;
}

.tab.file {
  width: 76px;
  text-align: left;
  padding-left: 25px;
}

.tab.active {
  padding: 0 13px;
  background: #f3f3f3;
  color: #217346;
}

.tab.context {
  background: #1b5b38;
  padding: 0 12px;
  margin-left: 1px;
}

.tab.tell-me,
.tab.share {
  display: flex;
  align-items: center;
  gap: 14px;
  padding-left: 17px;
}

.tab.share {
  gap: 4px;
  margin-left: auto;
  padding-right: 24px;
}

/* Ribbon */
.ribbon {
  flex: none;
  display: flex;
  height: 114px;
  background: #f3f3f3;
  border-bottom: 1px solid #d2d2d2;
}

.group {
  position: relative;
  flex: none;
  display: flex;
  flex-direction: column;
  margin: 4px 0;
  border-right: 1px solid #b5b5b5;
}

.group-body {
  flex: 1;
  min-height: 0;
  display: flex;
  align-items: flex-start;
  padding-top: 5px;
}

.group-name {
  flex: none;
  height: 14px;
  font-size: 12px;
  line-height: 14px;
  text-align: center;
}

.launcher {
  position: absolute;
  right: 5px;
  bottom: 2px;
  width: 9px;
  height: 9px;
  border-top: 1px solid #777;
  border-left: 1px solid #777;
}

.launcher::after {
  content: "";
  position: absolute;
  right: 0;
  bottom: 0;
  border: 3px solid #777;
  border-top-color: transparent;
  border-left-color: transparent;
}

.launcher.pale {
  opacity: 0.5;
}

.clipboard {
  width: 201px;
}

.clipboard .group-name {
  padding-right: 20px;
}

.font {
  width: 266px;
}

.font .group-name,
.alignment .group-name,
.number .group-name {
  padding-right: 20px;
}

.alignment {
  width: 333px;
}

.number {
  width: 184px;
}

.styles {
  width: 469px;
}

.cells {
  width: 172px;
}

.editing {
  width: 234px;
}

.big-btn {
  display: flex;
  flex-direction: column;
  align-items: center;
  gap: 3px;
}

.big-btn svg {
  height: 38px;
}

.big-btn > .caret {
  margin-top: 4px;
}

.big-btn .caret {
  vertical-align: 2px;
}

.stack {
  display: flex;
  flex-direction: column;
  gap: 8px;
}

.tool {
  display: flex;
  align-items: center;
  gap: 6px;
  height: 20px;
}

.clipboard .group-body {
  padding-left: 18px;
  gap: 11px;
}

.rows {
  flex-direction: column;
  gap: 9px;
  padding: 10px 10px 0;
}

.row {
  display: flex;
  align-items: center;
  height: 28px;
}

.combo {
  height: 28px;
  padding: 0 2px;
  border: 1px solid #c6c6c6;
  appearance: none;
  background-color: #fff;
  background-image: linear-gradient(45deg, transparent 50%, #666 50%), linear-gradient(-45deg, transparent 50%, #666 50%);
  background-repeat: no-repeat;
  background-size: 4px 4px;
  background-position: right 8px center, right 4px center;
}

.combo.pale {
  width: 164px;
  color: #999;
  opacity: 1;
  background-image: linear-gradient(45deg, transparent 50%, #b1b1b1 50%), linear-gradient(-45deg, transparent 50%, #b1b1b1 50%);
}

.font-name {
  width: 130px;
}

.font-size {
  width: 60px;
  margin-right: 3px;
  border-left: none;
}

.icon-btn {
  display: flex;
  align-items: center;
  justify-content: center;
  width: 28px;
  height: 28px;
}

.grow {
  font-size: 17px;
  color: #666;
}

.grow svg {
  align-self: flex-start;
  margin-top: 4px;
}

.letter {
  font-size: 16px;
  font-weight: 600;
  color: #444;
}

.italic {
  font-family: "Liberation Serif", serif;
  font-style: italic;
  font-size: 18px;
}

.font-color b {
  width: 20px;
  border-bottom: 5px solid #f00;
  font-size: 17px;
  line-height: 17px;
  color: #555;
}

.sep {
  flex: none;
  width: 1px;
  height: 26px;
  margin: 0 5px;
  background: #d0d0d0;
}

.sep.tall {
  height: 71px;
  margin: 2px 8px 0 2px;
}

.font .row .sep {
  margin: 0 3px 0 8px;
}

.font .row .caret {
  margin: 0 2px 0 4px;
}

.number .row .sep {
  margin: 0 1px;
}

.number .row .caret {
  margin: 0 4px;
}

.alignment .group-body {
  padding: 10px 0 0 10px;
}

.pair {
  gap: 9px;
}

.alignment .pair:last-child {
  gap: 17px;
  padding-top: 4px;
}

.align-btn {
  display: flex;
  align-items: center;
  justify-content: center;
  width: 28px;
  height: 28px;
}

.align-btn.top {
  align-items: flex-start;
  padding-top: 4px;
}

.align-btn.bottom {
  align-items: flex-end;
  padding-bottom: 4px;
}

.align-btn.on {
  background: #c5c5c5;
}

/* Four ruled lines, every other one shorter */
.lines {
  width: 18px;
  height: 13px;
  background:
    linear-gradient(#666, #666) center 0 / 18px 1px,
    linear-gradient(#666, #666) center 4px / 12px 1px,
    linear-gradient(#666, #666) center 8px / 18px 1px,
    linear-gradient(#666, #666) center 12px / 12px 1px;
  background-repeat: no-repeat;
}

.lines.center {
  width: 16px;
}

.lines.left,
.lines.right {
  width: 15px;
  background-position: 0 0, 0 4px, 0 8px, 0 12px;
}

.lines.right {
  background-position: 100% 0, 100% 4px, 100% 8px, 100% 12px;
}

.sign {
  font-size: 18px;
  color: #999;
}

.comma {
  padding-bottom: 8px;
  font-size: 24px;
  font-weight: 700;
}

.decimals {
  flex-direction: column;
  align-items: flex-end;
  font-size: 10px;
  font-weight: 600;
  line-height: 10px;
  color: #999;
}

.styles .group-body {
  padding: 3px 11px 0 12px;
}

.styles .big-btn {
  padding-top: 2px;
  width: 85px;
}

.styles .big-btn + .big-btn {
  width: 72px;
}

.gallery {
  flex: 1;
  height: 78px;
  display: grid;
  grid-template-columns: 1fr 1fr;
  gap: 8px;
  padding: 6px 4px;
  border: 1px solid #c6c6c6;
  background: #fff;
}

.style {
  padding: 0 5px;
  text-align: left;
  font-size: 18px;
  font-weight: 300;
  color: #888;
  background: #e6e0e5;
}

.style.normal {
  font-size: 14px;
  font-weight: 400;
  color: #777;
  background: #f6f0f7;
}

.style.neutral {
  background: #eae4eb;
}

.gallery-scroll {
  width: 19px;
  height: 78px;
  display: flex;
  flex-direction: column;
  border: 1px solid #c6c6c6;
  border-left: none;
}

.gallery-scroll button {
  flex: 1;
  font-size: 0;
  background: #e8e8e8;
}

.gallery-scroll button + button {
  border-top: 1px solid #c6c6c6;
}

/* The "more" arrow carries a bar above it */
.caret.more {
  position: relative;
}

.caret.more::before {
  content: "";
  position: absolute;
  top: -8px;
  left: -4px;
  width: 8px;
  height: 1px;
  background: #b1b1b1;
}

.cells .group-body {
  padding-left: 10px;
}

.cells .big-btn {
  width: 50px;
}

.editing .group-body {
  padding-left: 15px;
}

.editing .stack {
  width: 104px;
  gap: 7px;
  margin-right: 1px;
}

.editing .big-btn {
  width: 52px;
}

.collapse {
  margin: auto 10px 8px auto;
}

/* Formula bar */
.formula-bar {
  flex: none;
  display: flex;
  height: 67px;
  padding: 12px 7px 7px 6px;
}

.name-box,
.formula-tools,
.formula-box {
  display: flex;
  align-items: center;
  border: 1px solid #c6c6c6;
  background: #fdfdfd;
}

.name-box {
  width: 127px;
  padding: 0 7px 0 6px;
}

.name-box input {
  flex: 1;
  min-width: 0;
  font-size: 18px;
  font-weight: 300;
  color: #444;
}

.grip {
  width: 3px;
  height: 13px;
  margin: auto 17px;
  background: repeating-linear-gradient(#aaa 0 3px, transparent 3px 5px);
}

.formula-tools {
  width: 137px;
  justify-content: space-around;
  padding: 0 2px;
}

.fx {
  font: italic 24px "Liberation Serif", serif;
  color: #555;
}

.fx small {
  font-size: 16px;
}

.formula-box {
  flex: 1;
  margin-left: 3px;
  padding: 0 4px 0 8px;
}

.formula-box input {
  flex: 1;
}

/* Worksheet */
.sheet {
  flex: 1;
  min-height: 0;
  display: flex;
  border-bottom: 1px solid #999;
}

.grid {
  position: relative;
  flex: 1;
  overflow: hidden;
}

table {
  width: 1894px;
  table-layout: fixed;
  border-collapse: separate;
  border-spacing: 0;
  background: #fff;
}

.w-head {
  width: 29px;
}

.w-a {
  width: 173px;
}

.w-b {
  width: 166px;
}

.w-c {
  width: 246px;
}

.w-d {
  width: 85px;
}

.w-e {
  width: 115px;
}

.w-rest {
  width: 72px;
}

th {
  height: 40px;
  background: #e6e6e6;
  border-right: 1px solid #999;
  border-bottom: 1px solid #bbb;
  font-weight: 400;
  color: #333;
}

thead th {
  height: 39px;
  padding-top: 4px;
  border-right-color: #c6c6c6;
  border-bottom-color: #999;
}

.corner {
  background: linear-gradient(to bottom right, transparent 50%, #b2b2b2 50%) no-repeat 0 8px / 25px 27px #e6e6e6;
}

td {
  height: 40px;
  padding: 0 2px;
  border-right: 1px solid #d4d4d4;
  border-bottom: 1px solid #d4d4d4;
  font-size: 17px;
  font-weight: 300;
  line-height: 24px;
  white-space: nowrap;
  overflow: hidden;
  color: #000;
}

.plain {
  font-size: 14px;
  font-weight: 400;
}

.page-break {
  border-right-color: transparent;
  background: repeating-linear-gradient(#999 0 5px, transparent 5px 8px) no-repeat right / 1px 100% border-box;
}

.rule td:not(.plain) {
  border-bottom-color: #000;
}

.dotted td:not(.plain) {
  border-bottom: 1px dotted #000;
}

td.bar {
  border-right-color: #000;
}

.mid {
  text-align: center;
}

.end {
  text-align: right;
}

.strong {
  font-size: 18px;
  font-weight: 600;
}

.title {
  font-size: 25px;
  font-weight: 600;
}

.small {
  font-size: 15px;
}

.line {
  display: flex;
  gap: 4px;
}

.dots {
  flex: 1;
  overflow: hidden;
  font-size: 15px;
  font-weight: 400;
}

.dots.day {
  flex: none;
  width: 66px;
}

.dots.year {
  flex: none;
  width: 52px;
}

.branch {
  padding-right: 6px;
}

.office {
  padding-left: 102px;
}

.date {
  padding-left: 258px;
}

.cash {
  gap: 48px;
}

.words {
  padding-left: 31px;
}

.unit {
  padding-right: 54px;
}

.spill {
  display: flex;
  justify-content: center;
}

.item {
  display: grid;
  grid-template-columns: 112px 56px 98px 58px auto;
  padding-left: 6px;
}

/* Shapes that float over the cells */
.shape {
  position: absolute;
  font-size: 21px;
  font-weight: 500;
  line-height: 28px;
  white-space: nowrap;
  color: #000;
}

/* Pulls the next glyph over the one before it */
.shape i {
  margin-left: -6px;
}

.person i,
.month i {
  margin-left: -9px;
}

.unit-name i {
  margin-left: -7px;
}

.kind i,
.year-be i,
.amount i,
.surname i {
  margin-left: -4px;
}

.note {
  left: 947px;
  top: 76px;
  font-size: 24px;
  line-height: 40px;
  color: #880015;
}

.kong {
  left: 720px;
  top: 95px;
  font-size: 17px;
  font-weight: 600;
}

.no-sent,
.no-recv {
  left: 737px;
  top: 120px;
  font: 17px/28px "Liberation Serif", serif;
}

.no-recv {
  top: 158px;
}

.month {
  left: 608px;
  top: 275px;
}

.year-be {
  left: 730px;
  top: 275px;
}

.person {
  left: 137px;
  top: 319px;
}

.surname {
  left: 226px;
  top: 319px;
}

.tick-box {
  left: 126px;
  top: 367px;
  width: 22px;
  height: 22px;
  border: 1px solid #000;
  background: #fff;
  font-size: 17px;
  text-align: center;
}

.tick-box.two {
  left: 207px;
  top: 371px;
  width: 20px;
  height: 23px;
}

.kind {
  left: 247px;
  top: 366px;
}

.amount {
  left: 488px;
  top: 366px;
}

.baht {
  left: 672px;
  top: 366px;
}

.paren {
  left: 227px;
  top: 409px;
}

.ticks {
  left: 116px;
  top: 437px;
  font-size: 10px;
}

.ticks {
  font-size: 16px;
}

.unit-name {
  left: 227px;
  top: 435px;
}

.blank-box {
  left: 816px;
  top: 322px;
  width: 573px;
  height: 128px;
  padding: 11px;
  border: 1px solid #bbb;
  background: #fff;
}

.position {
  left: 498px;
  top: 311px;
}

.selection {
  left: 362px;
  top: 250px;
}

.v-scroll {
  width: 20px;
  display: flex;
  flex-direction: column;
  margin: 6px 3px 0 3px;
  background: #d9d9d9;
}

.v-scroll button,
.h-scroll button {
  height: 19px;
  font-size: 0;
  background: #fff;
  border: 1px solid #c6c6c6;
}

.v-scroll .caret,
.h-scroll .caret {
  border-width: 5px 5px 0;
}

.v-scroll .thumb {
  height: 305px;
  margin-bottom: auto;
  background: #fff;
  border: 1px solid #ababab;
}

/* Sheet tabs */
.sheet-bar {
  flex: none;
  display: flex;
  align-items: center;
  height: 30px;
  padding-left: 16px;
  border-bottom: 1px solid #c6c6c6;
}

.nav-arrow {
  width: 29px;
}

.nav-arrow .caret {
  border-width: 5px 5px 0;
  border-top-color: #c0c0c0;
}

.sheet-tab {
  align-self: flex-start;
  width: 80px;
  height: 26px;
  margin: 0 32px 0 28px;
  background: #fff;
  border-right: 1px solid #999;
  border-left: 1px solid #999;
  border-bottom: 3px solid #217346;
  font-weight: 700;
  color: #217346;
}

.add-sheet {
  height: 21px;
}

.sheet-bar .grip {
  margin: 0 15px 0 auto;
}

.h-scroll {
  display: flex;
  width: 206px;
  height: 19px;
  margin-right: 23px;
}

.h-scroll button {
  width: 19px;
}

.track {
  flex: 1;
  margin-right: 2px;
  background: #d9d9d9;
}

.track .thumb {
  display: block;
  width: 156px;
  height: 19px;
  background: #fff;
  border: 1px solid #ababab;
}

/* Status bar */
.status-bar {
  flex: none;
  display: flex;
  align-items: center;
  height: 27px;
  padding: 0 8px;
  background: #f3f3f3;
  font-size: 12px;
}

.ready {
  width: 57px;
}

.views {
  display: flex;
  margin: 0 2px 0 auto;
}

.views button {
  width: 42px;
  height: 27px;
}

.views svg {
  vertical-align: middle;
}

.views .on {
  background: #c8c8c8;
}

.zoom-btn {
  display: flex;
  align-items: center;
  justify-content: center;
  width: 18px;
}

.zoom {
  width: 125px;
  appearance: none;
  height: 14px;
  background: linear-gradient(#aaa, #aaa) no-repeat center / 100% 1px;
}

.zoom::-webkit-slider-thumb {
  appearance: none;
  width: 6px;
  height: 14px;
  background: #666;
}

.zoom-value {
  margin-left: 9px;
}

/* Taskbar */
.taskbar {
  flex: none;
  display: flex;
  height: 50px;
  background: #0a0b0f;
  color: #fff;
}

.sys {
  width: 60px;
}

.app {
  width: 62px;
}

.sys + .app {
  margin-left: 3px;
}

.taskbar svg {
  vertical-align: middle;
}

.running {
  background: linear-gradient(#76b9ed, #76b9ed) no-repeat center bottom / 51px 3px;
}

.current {
  background-color: #3b3d40;
  background-size: 100% 3px;
}

.tray {
  display: flex;
  align-items: center;
  margin-left: auto;
  margin-right: 5px;
  padding-right: 14px;
  border-right: 1px solid #666;
}

.battery {
  position: relative;
  width: 61px;
  height: 25px;
  margin-right: 2px;
  border: 3px solid #fff;
  background: linear-gradient(90deg, #169c4c 68%, #000 68%);
  font-size: 16px;
  line-height: 19px;
  text-align: center;
}

.battery::after {
  content: "";
  position: absolute;
  right: -6px;
  top: 4px;
  width: 3px;
  height: 11px;
  background: #fff;
}

.bolt {
  margin: 0 24px 0 8px;
}

.gap {
  width: 16px;
}

.lang {
  width: 44px;
  text-align: center;
}

.clock {
  width: 84px;
  line-height: 23px;
  text-align: center;
}

.notes {
  margin-left: 14px;
}

/* Pen strokes */
.ink {
  position: absolute;
  top: 0;
  left: 0;
  fill: none;
  stroke: #880015;
  stroke-width: 1;
  pointer-events: none;
}
```
